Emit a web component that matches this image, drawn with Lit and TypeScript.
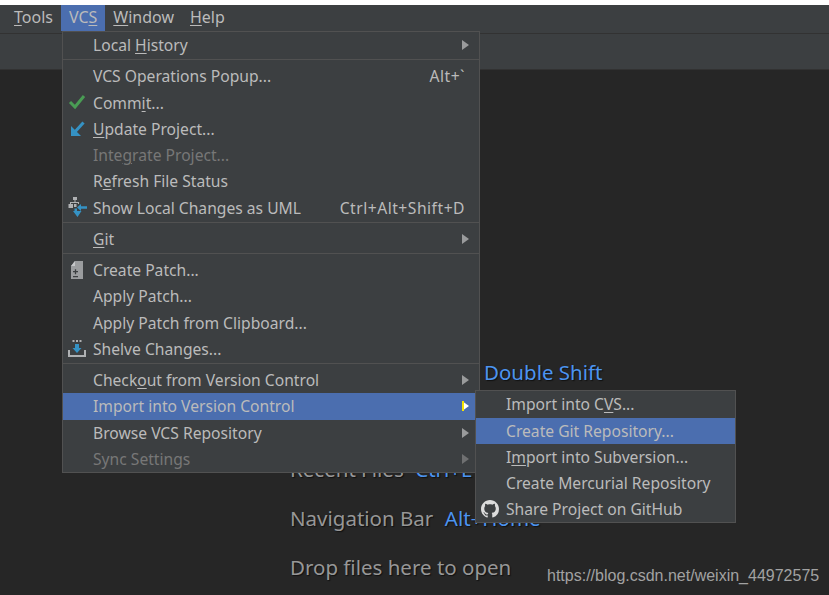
import { LitElement, html, css, svg } from "lit";
import { customElement } from "lit/decorators.js";

const check = svg`<polyline points="2,9 7,14 16,3" fill="none" stroke="#499c54" stroke-width="3"/>`;
const update = svg`<path d="M3 7v10h10z" fill="#3592c4"/><path d="M5 15L15.500 3.500" stroke="#3592c4" stroke-width="3"/>`;
const uml = svg`<g fill="#afb1b3"><rect x="5" y="-1" width="4" height="3"/><rect x="6.500" y="2" width="1" height="2"/><rect x="2" y="4" width="9" height="1"/><rect x="2" y="5" width="1" height="1"/><rect x="10" y="5" width="1" height="1"/><rect x="0.500" y="6" width="4.500" height="4"/><rect x="6" y="6" width="2.500" height="3"/></g>
  <path d="M9 9.500L13 6v2.200h6v2.600h-6V13zM6.500 10.500h2.500V13L13.500 13 9.500 19 5 13h1.500z" fill="#3592c4"/>`;
const patch = svg`<path d="M7 1h8v18H3V6z" fill="#9b9d9f"/><path d="M7 1v5H3z" fill="#c4c6c8"/><path d="M5 11.700h5M7.500 9.200v5M5 16.700h5" stroke="#3c3f41" stroke-width="1.300" fill="none"/>`;
const shelve = svg`<path d="M0 11h2v5h14v-5h2v7H0z" fill="#afb1b3"/><path d="M7 5h4v4h2.500L9 14 4.500 9H7z" fill="#3592c4"/><path d="M4.500 2h9" stroke="#afb1b3" stroke-width="2" stroke-dasharray="2 1.500"/>`;
const github = svg`<path fill="#dcdcdc" d="M8 0C3.580 0 0 3.580 0 8c0 3.540 2.290 6.530 5.470 7.590.4.070.55-.17.55-.38 0-.19-.01-.82-.01-1.490-2.010.37-2.530-.49-2.690-.94-.09-.23-.48-.94-.82-1.130-.28-.15-.68-.52-.01-.53.63-.01 1.080.58 1.230.82.720 1.210 1.870.87 2.330.66.070-.52.28-.87.51-1.070-1.780-.2-3.640-.89-3.640-3.950 0-.87.31-1.590.82-2.150-.08-.2-.36-1.020.08-2.120 0 0 .67-.21 2.200.82.64-.18 1.320-.27 2-.27.68 0 1.360.09 2 .27 1.530-1.040 2.200-.82 2.200-.82.44 1.100.16 1.920.08 2.120.51.56.82 1.270.82 2.150 0 3.070-1.870 3.750-3.650 3.950.29.25.54.730.54 1.480 0 1.070-.01 1.930-.01 2.200 0 .21.15.46.55.38A8.013 8.013 0 0016 8c0-4.420-3.580-8-8-8z"/>`;

@customElement("app-root")
export class AppRoot extends LitElement {
  static styles = css`
    :host {
      display: block;
      width: 829px;
      height: 595px;
      overflow: hidden;
      position: relative;
      font-family: "Noto Sans", "Open Sans", sans-serif;
      font-size: 15.650px;
      color: #bbbbbb;
      background: #262626;
    }
    u { text-underline-offset: 2px; text-decoration-thickness: 1px; }
    .strip { height: 5px; background: #ffffff; }
    .menubar {
      height: 28px;
      background: #3c3f41;
      border-bottom: 1px solid #323232;
      display: flex;
      padding-left: 6px;
      font-size: 16px;
    }
    .top {
      padding: 0 8px;
      height: 26px;
      line-height: 25px;
    }
    .top.on { background: #4b6eaf; }
    .toolbar {
      height: 35px;
      background: #3c3f41;
      border-bottom: 1px solid #323232;
    }
    .welcome {
      display: flex;
      flex-direction: column;
      padding: 278px 0 0 290px;
      font-size: 20.500px;
      color: #979797;
      text-shadow: 1px 1px 1px #111111;
    }
    .hint { height: 48.700px; line-height: 48px; display: flex; gap: 11.500px; white-space: nowrap; }
    .key { color: #4c94f0; }
    .water {
      position: absolute;
      left: 547px;
      top: 566px;
      font: 16px/20px "Liberation Sans", Arial, sans-serif;
      color: #a2a2a2;
    }
    .menu {
      position: absolute;
      background: #3c3f41;
      border: 1px solid #515151;
      white-space: nowrap;
      box-sizing: border-box;
    }
    .main { left: 62px; top: 31px; width: 418px; height: 442px; }
    .sub { left: 412px; top: -3px; width: 261px; height: 133px; z-index: 2; }
    .row {
      position: relative;
      display: flex;
      align-items: center;
      height: 26.250px;
      padding-right: 14px;
    }
    .row.on { background: #4b6eaf; }
    .row.off { color: #777777; }
    .slot {
      width: 30px;
      flex: none;
      display: flex;
      justify-content: center;
      align-items: center;
    }
    .slot svg { width: 20px; height: 20px; display: block; overflow: visible; }
    .label { flex: 1; }
    .shortcut { letter-spacing: 0.500px; }
    .arrow {
      width: 0; height: 0;
      border-left: 7px solid #9a9b9c;
      border-top: 5px solid transparent;
      border-bottom: 5px solid transparent;
      margin-right: -4px;
    }
    .off .arrow { border-left-color: #6f7071; }
    .cursor { border-left-color: #ffffff; position: relative; }
    .cursor::before {
      content: "";
      position: absolute;
      left: -7px; top: -5px;
      width: 2px; height: 10px;
      background: #f5e400;
    }
    .sep { height: 1px; background: #515151; margin: 1px 0 3px; }
    .sub .slot svg { width: 18px; height: 18px; margin-left: -2px; }
  `;

  private item(label: unknown, opts: { icon?: unknown; key?: string; arrow?: boolean; off?: boolean } = {}) {
    return html`<div class="row ${opts.off ? "off" : ""}">
      <span class="slot">${opts.icon ? html`<svg viewBox="0 0 20 20">${opts.icon}</svg>` : ""}</span>
      <span class="label">${label}</span>
      ${opts.key ? html`<span class="shortcut">${opts.key}</span>` : ""}
      ${opts.arrow ? html`<span class="arrow"></span>` : ""}
    </div>`;
  }

  render() {
    return html`
      <div class="strip"></div>
      <div class="menubar">
        <span class="top"><u>T</u>ools</span>
        <span class="top on">VC<u>S</u></span>
        <span class="top"><u>W</u>indow</span>
        <span class="top"><u>H</u>elp</span>
      </div>
      <div class="toolbar"></div>
      <div class="welcome">
        <div class="hint"><span>Search Everywhere</span><span class="key">Double Shift</span></div>
        <div class="hint"><span>Go to File</span><span class="key">Ctrl+Shift+N</span></div>
        <div class="hint"><span>Recent Files</span><span class="key">Ctrl+E</span></div>
        <div class="hint"><span>Navigation Bar</span><span class="key">Alt+Home</span></div>
        <div class="hint"><span>Drop files here to open</span></div>
      </div>
      <div class="water">https://blog.csdn.net/weixin_44972575</div>
      <div class="menu main">
        ${this.item(html`Local <u>H</u>istory`, { arrow: true })}
        <div class="sep"></div>
        ${this.item("VCS Operations Popup...", { key: "Alt+`" })}
        ${this.item(html`Comm<u>i</u>t...`, { icon: check })}
        ${this.item(html`<u>U</u>pdate Project...`, { icon: update })}
        ${this.item(html`Inte<u>g</u>rate Project...`, { off: true })}
        ${this.item(html`R<u>e</u>fresh File Status`)}
        ${this.item("Show Local Changes as UML", { icon: uml, key: "Ctrl+Alt+Shift+D" })}
        <div class="sep"></div>
        ${this.item(html`<u>G</u>it`, { arrow: true })}
        <div class="sep"></div>
        ${this.item("Create Patch...", { icon: patch })}
        ${this.item("Apply Patch...")}
        ${this.item("Apply Patch from Clipboard...")}
        ${this.item("Shelve Changes...", { icon: shelve })}
        <div class="sep"></div>
        ${this.item(html`Check<u>o</u>ut from Version Control`, { arrow: true })}
        <div class="row on">
          <span class="slot"></span>
          <span class="label">Import into Version Control</span>
          <span class="arrow cursor"></span>
          <div class="menu sub">
            ${this.item(html`Import into C<u>V</u>S...`)}
            <div class="row on"><span class="slot"></span><span class="label">Create Git Repository...</span></div>
            ${this.item(html`I<u>m</u>port into Subversion...`)}
            ${this.item("Create Mercurial Repository")}
            <div class="row">
              <span class="slot"><svg viewBox="0 0 16 16">${github}</svg></span>
              <span class="label">Share Project on GitHub</span>
            </div>
          </div>
        </div>
        ${this.item("Browse VCS Repository", { arrow: true })}
        ${this.item("Sync Settings", { arrow: true, off: true })}
      </div>
    `;
  }
}
